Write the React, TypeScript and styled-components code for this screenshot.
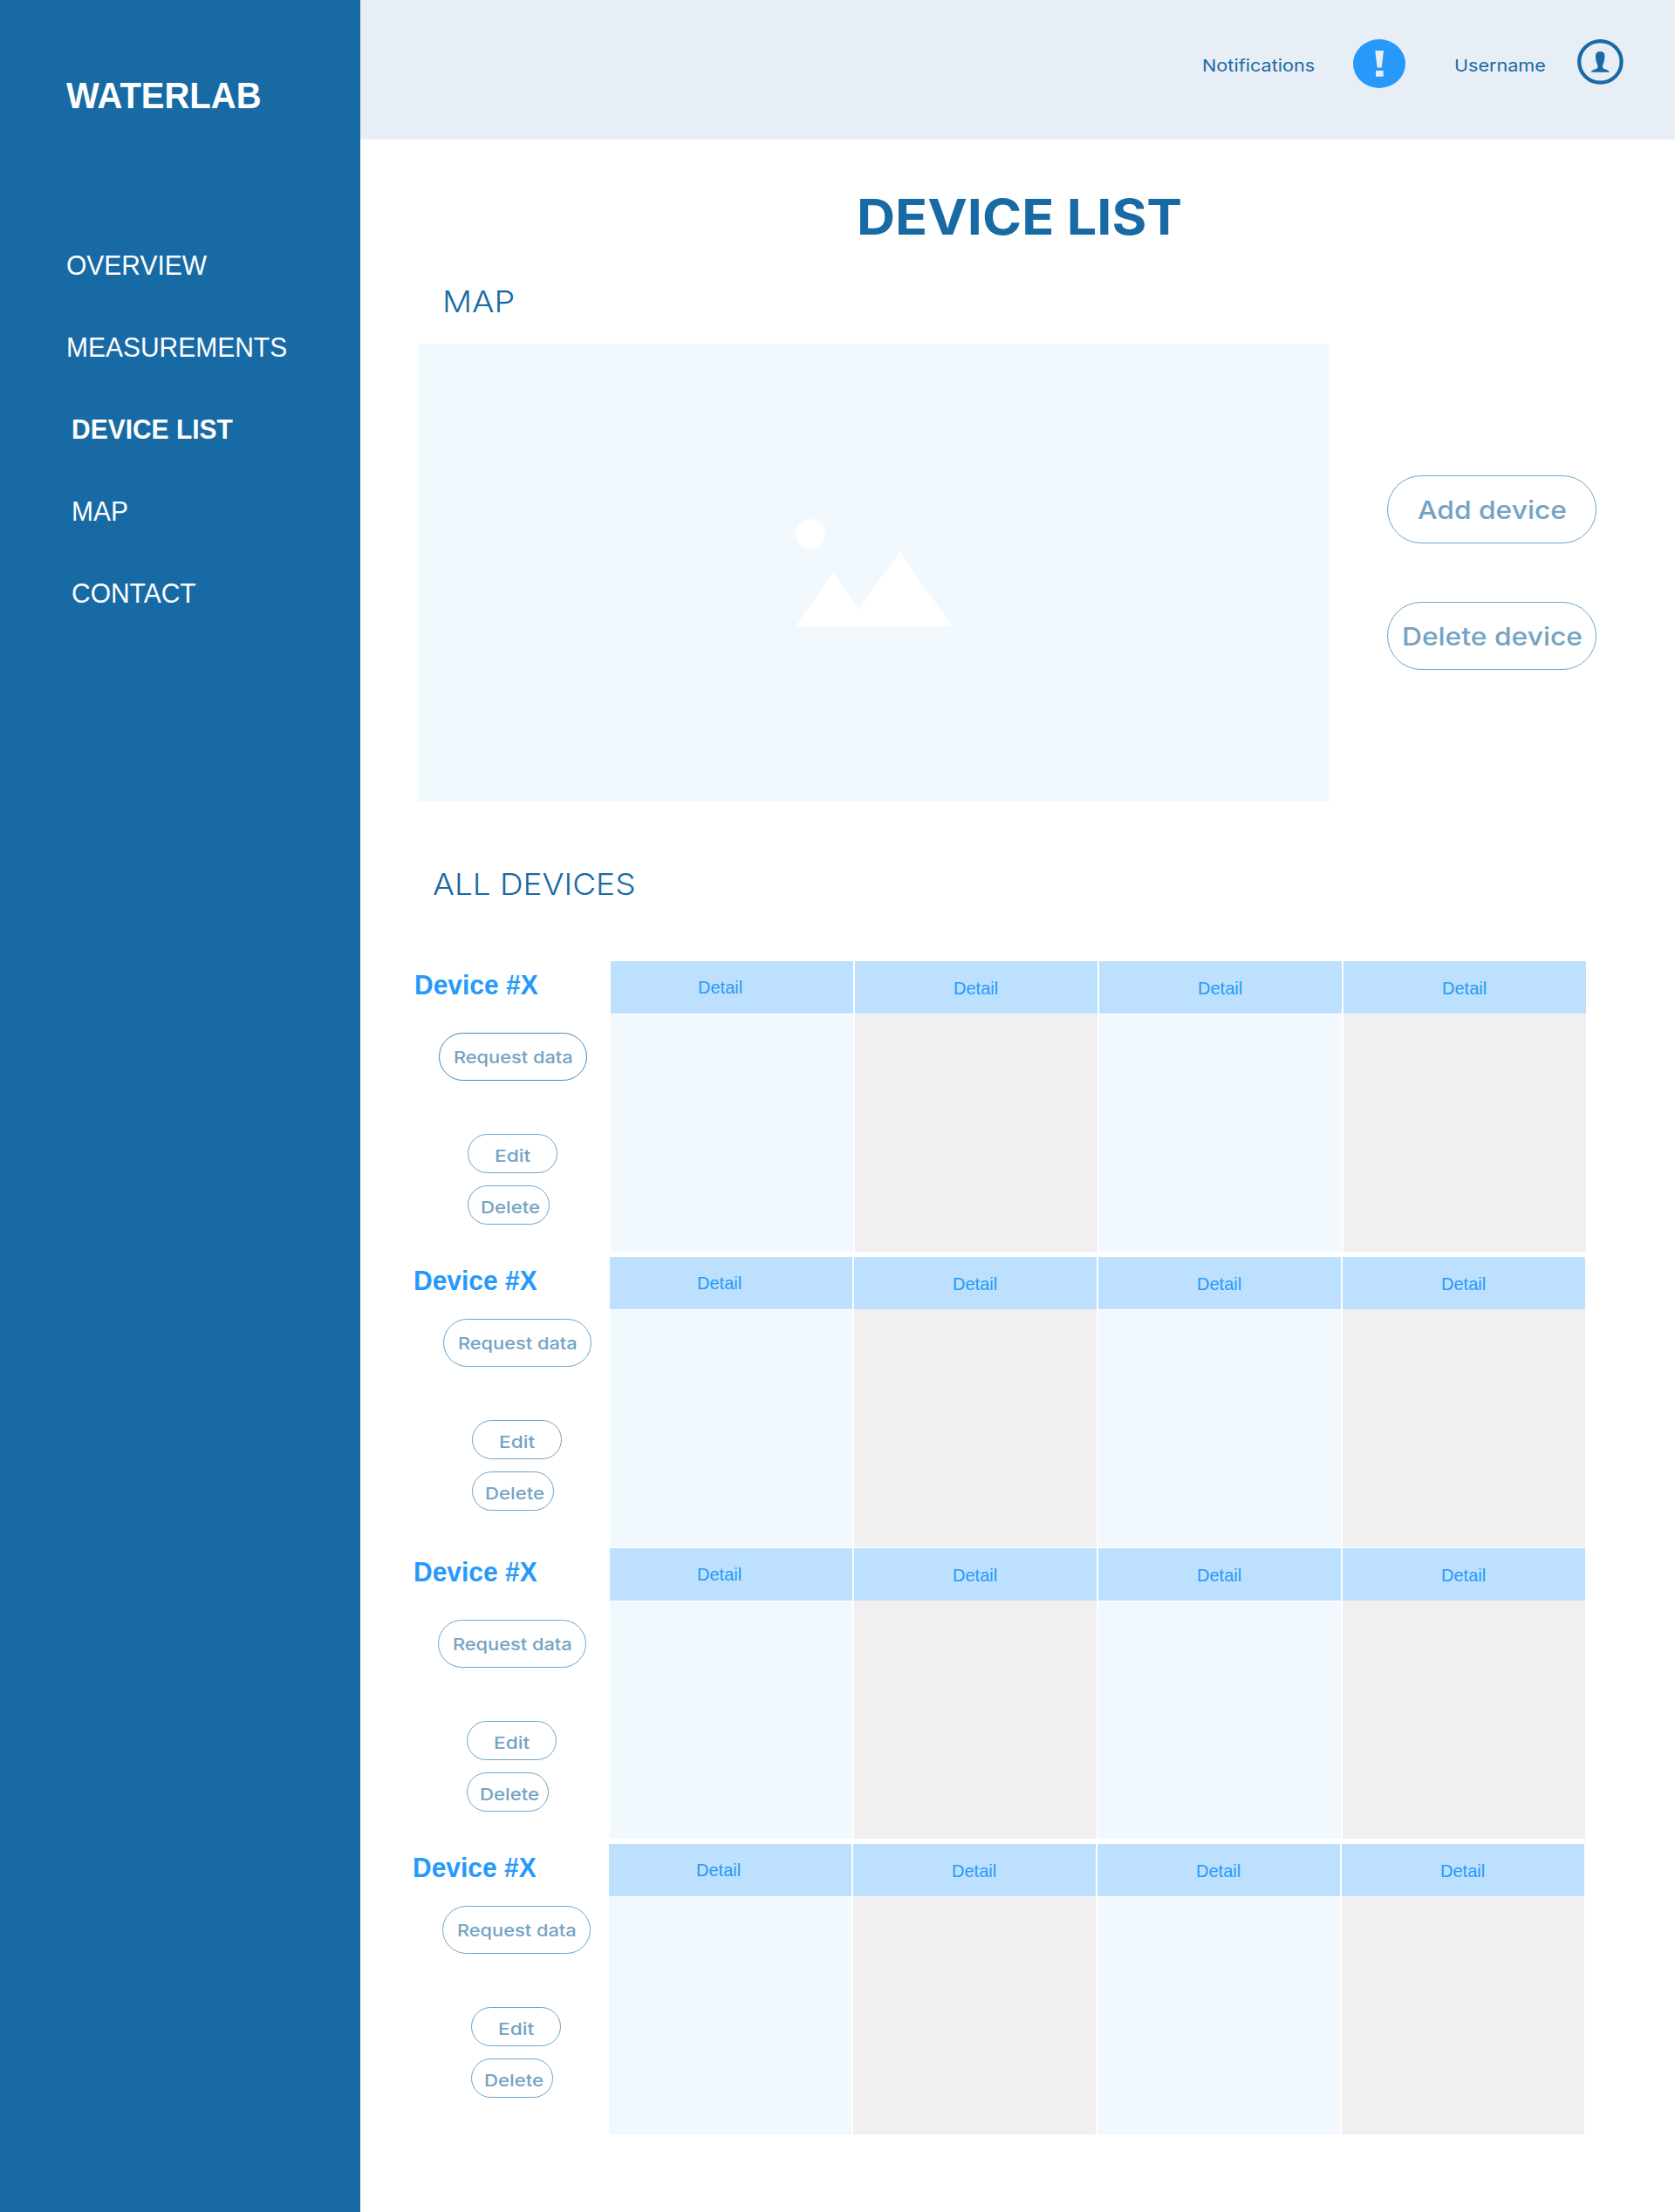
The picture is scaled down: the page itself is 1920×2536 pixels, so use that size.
import React from "react";
import styled, { createGlobalStyle } from "styled-components";

const color = {
  navy: "#186AA5",
  muted: "#74A3C4",
  line: "#6FA2C6",
  bright: "#2699FB",
  head: "#BCE0FD",
  pale: "#F1F9FF",
  grey: "#F1EFEF",
  bar: "#E8EEF6",
};

const GlobalStyle = createGlobalStyle`
  * { box-sizing: border-box; }
  body { margin: 0; background: #fff; }
  h1, h2, h3, p, ul { margin: 0; padding: 0; font-weight: inherit; }
`;

const Page = styled.div`
  display: flex;
  width: 1920px;
  height: 2536px;
  background: #fff;
  font-family: Inter, "Liberation Sans", sans-serif;
`;

const Sidebar = styled.aside`
  width: 413px;
  flex: none;
  padding: 86px 0 0 76px;
  background: ${color.navy};
  color: #fff;
  font-family: "Liberation Sans", Arial, sans-serif;
`;

const Brand = styled.p`
  font-size: 41.6px;
  line-height: 47px;
  font-weight: 700;
`;

const Nav = styled.ul`
  display: flex;
  flex-direction: column;
  gap: 59px;
  margin-top: 154px;
  list-style: none;
`;

const NavItem = styled.li<{ $active?: boolean; $indent?: boolean }>`
  padding-left: ${(p) => (p.$indent ? 6 : 0)}px;
  font-size: 31.2px;
  line-height: 35px;
  font-weight: ${(p) => (p.$active ? 700 : 400)};
`;

const Main = styled.main`
  flex: 1;
  min-width: 0;
`;

const TopBar = styled.header`
  display: flex;
  align-items: flex-start;
  height: 160px;
  padding: 45px 0 0 965px;
  background: ${color.bar};
  color: ${color.navy};
`;

/* Adjusts the width of the letterforms without changing their height. */
const Wide = styled.span<{ $by: number; $center?: boolean }>`
  display: inline-block;
  white-space: nowrap;
  transform: scaleX(${(p) => p.$by});
  transform-origin: ${(p) => (p.$center ? "50%" : "0")} 50%;
`;

const BarLabel = styled.span<{ $width: number }>`
  width: ${(p) => p.$width}px;
  padding-top: 16px;
  font-size: 19.25px;
  line-height: 28px;
`;

const AlertIcon = styled.svg`
  width: 60px;
  height: 56px;
  margin-right: 56px;
`;

const UserIcon = styled.svg`
  width: 53px;
  height: 52px;
`;

const Title = styled.h1`
  padding: 55px 0 0 569px;
  color: ${color.navy};
  font-size: 56.5px;
  line-height: 68px;
  font-weight: 700;
`;

const SectionTitle = styled.h2<{ $top: number; $left: number }>`
  padding: ${(p) => p.$top}px 0 0 ${(p) => p.$left}px;
  color: ${color.navy};
  font-size: 34.4px;
  line-height: 40px;
  font-weight: 300;
`;

const MapSection = styled.section`
  display: flex;
  margin: 28px 0 0 66px;
`;

const MapBox = styled.div`
  display: flex;
  width: 1045px;
  height: 525px;
  padding: 201px 0 0 433px;
  background: ${color.pale};
`;

const Actions = styled.div`
  display: flex;
  flex-direction: column;
  gap: 67px;
  padding: 151px 0 0 66px;
`;

const Pill = styled.button`
  display: block;
  border: 1px solid ${color.line};
  background: #fff;
  color: ${color.muted};
  font-family: inherit;
  font-weight: 450;
  text-align: left;
`;

const LargeButton = styled(Pill)<{ $inset: number }>`
  width: 240px;
  height: 78px;
  padding: 3px 0 1px ${(p) => p.$inset}px;
  border-radius: 39px;
  font-size: 29px;
  line-height: 36px;
`;

const RequestButton = styled(Pill)<{ $strong?: boolean }>`
  width: 170px;
  height: 55px;
  padding: 0 0 0 16px;
  border-color: ${(p) => (p.$strong ? "#4688B7" : color.line)};
  border-radius: 27.5px;
  font-size: 19.25px;
  line-height: 28px;
`;

const SmallButton = styled(Pill)<{ $width: number; $inset: number }>`
  width: ${(p) => p.$width}px;
  height: 45px;
  padding: 5px 0 0 ${(p) => p.$inset}px;
  border-radius: 22.5px;
  font-size: 19.25px;
  line-height: 28px;
`;

const DeviceList = styled.div`
  padding-top: 68px;
`;

const DeviceRow = styled.section<{ $shift: number; $gap: number }>`
  display: flex;
  margin: ${(p) => p.$gap}px 0 0 ${(p) => 61 - p.$shift}px;
`;

const DevicePanel = styled.div`
  width: 226px;
  flex: none;
  padding-top: 10px;
`;

const DeviceName = styled.h3`
  padding-left: 1px;
  color: ${color.bright};
  font-family: "Liberation Sans", Arial, sans-serif;
  font-size: 31.2px;
  line-height: 35px;
  font-weight: 700;
`;

const DeviceActions = styled.div<{ $raised?: boolean }>`
  margin: ${(p) => (p.$raised ? "26px 0 0 35px" : "37px 0 0 29px")};
`;

const EditGroup = styled.div`
  display: flex;
  flex-direction: column;
  gap: 14px;
  margin: 61px 0 0 33px;
`;

const Table = styled.div`
  display: grid;
  grid-template-columns: repeat(4, 278px);
  column-gap: 2px;
  height: 333px;
`;

const Column = styled.div`
  display: flex;
  flex-direction: column;
`;

const ColumnHead = styled.div<{ $first: boolean }>`
  height: 60px;
  padding: ${(p) => (p.$first ? "0 27px 0 0" : "1px 0 0")};
  background: ${color.head};
  color: ${color.bright};
  font-family: "Liberation Sans", Arial, sans-serif;
  font-size: 20.8px;
  line-height: 59px;
  text-align: center;
`;

const ColumnBody = styled.div<{ $shaded: boolean }>`
  flex: 1;
  margin-top: ${(p) => (p.$shaded ? 0 : 1)}px;
  background: ${(p) => (p.$shaded ? color.grey : color.pale)};
`;

const devices = [
  { gap: 0, shift: 0, raised: false },
  { gap: 6, shift: 1, raised: true },
  { gap: 1, shift: 1, raised: false },
  { gap: 6, shift: 2, raised: true },
];

const navItems = [
  { label: "OVERVIEW" },
  { label: "MEASUREMENTS" },
  { label: "DEVICE LIST", indent: true, active: true },
  { label: "MAP", indent: true },
  { label: "CONTACT", indent: true },
];

function Device({ gap, shift, raised, strong }: { gap: number; shift: number; raised: boolean; strong: boolean }) {
  return (
    <DeviceRow $gap={gap} $shift={shift}>
      <DevicePanel>
        <DeviceName>
          <Wide $by={0.961}>Device #X</Wide>
        </DeviceName>
        <DeviceActions $raised={raised}>
          <RequestButton $strong={strong}>
            <Wide $by={1.132}>Request data</Wide>
          </RequestButton>
          <EditGroup>
            <SmallButton $width={103} $inset={30}>
              <Wide $by={1.18}>Edit</Wide>
            </SmallButton>
            <SmallButton $width={94} $inset={13.5}>
              <Wide $by={1.153}>Delete</Wide>
            </SmallButton>
          </EditGroup>
        </DeviceActions>
      </DevicePanel>
      <Table>
        {[0, 1, 2, 3].map((i) => (
          <Column key={i}>
            <ColumnHead $first={i === 0}>
              <Wide $by={0.961} $center>Detail</Wide>
            </ColumnHead>
            <ColumnBody $shaded={i % 2 === 1} />
          </Column>
        ))}
      </Table>
    </DeviceRow>
  );
}

export default function App() {
  return (
    <>
      <GlobalStyle />
      <Page>
        <Sidebar>
          <Brand>
            <Wide $by={0.961}>WATERLAB</Wide>
          </Brand>
          <Nav>
            {navItems.map((n) => (
              <NavItem key={n.label} $indent={n.indent} $active={n.active}>
                <Wide $by={0.961}>{n.label}</Wide>
              </NavItem>
            ))}
          </Nav>
        </Sidebar>
        <Main>
          <TopBar>
            <BarLabel $width={173}>
              <Wide $by={1.125}>Notifications</Wide>
            </BarLabel>
            <AlertIcon viewBox="0 0 60 56">
              <ellipse cx="30" cy="28" rx="30" ry="28" fill={color.bright} />
              <path d="M25.3 13h9.7l-2.2 19.5h-5.2zM26 36h8.7v6.8H26z" fill={color.bar} />
            </AlertIcon>
            <BarLabel $width={141}>
              <Wide $by={1.12}>Username</Wide>
            </BarLabel>
            <UserIcon viewBox="0 0 53 52">
              <ellipse cx="26.4" cy="25.9" rx="24.2" ry="23.8" fill="none" stroke={color.navy} strokeWidth="4.2" />
              <path
                d="M26.2 14C22.9 14 21 15.7 21 19C21 22 21.3 24.3 22 26.5C22.7 28.6 23.400 29.400 23.400 31C23.400 32.700 22.800 33.600 21 34.200C18.500 34.900 16.500 35.600 15.500 37.800H37C36 35.600 34 34.900 31.400 34.200C29.600 33.600 29 32.700 29 31C29 29.400 29.700 28.600 30.400 26.500C31.100 24.300 31.400 22 31.400 19C31.400 15.700 29.500 14 26.200 14Z"
                fill={color.navy}
              />
            </UserIcon>
          </TopBar>
          <Title>
            <Wide $by={1.081}>DEVICE LIST</Wide>
          </Title>
          <SectionTitle $top={43} $left={94}>
            <Wide $by={1.1}>MAP</Wide>
          </SectionTitle>
          <MapSection>
            <MapBox>
              <svg width="180" height="124" viewBox="0 0 180 124" fill="#fff">
                <circle cx="17" cy="17" r="17" />
                <path d="M0.3 123L42.800 61.700 72.500 104 119.300 37.300 179 123z" />
              </svg>
            </MapBox>
            <Actions>
              <LargeButton $inset={34}>
                <Wide $by={1.095}>Add device</Wide>
              </LargeButton>
              <LargeButton $inset={15.5}>
                <Wide $by={1.096}>Delete device</Wide>
              </LargeButton>
            </Actions>
          </MapSection>
          <SectionTitle $top={75} $left={83}>
            <Wide $by={1.075}>ALL DEVICES</Wide>
          </SectionTitle>
          <DeviceList>
            {devices.map((d, i) => (
              <Device key={i} {...d} strong={i === 0} />
            ))}
          </DeviceList>
        </Main>
      </Page>
    </>
  );
}
